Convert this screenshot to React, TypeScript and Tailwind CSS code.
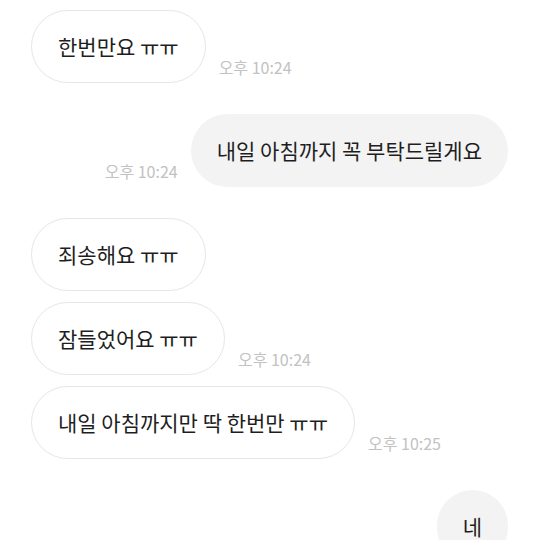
import React from 'react'

type Msg = { id: number; text: string; mine: boolean; time?: string; gap: 'group' | 'same' | 'none' }

const messages: Msg[] = [
  { id: 1, text: '한번만요 ㅠㅠ', mine: false, time: '오후 10:24', gap: 'none' },
  { id: 2, text: '내일 아침까지 꼭 부탁드릴게요', mine: true, time: '오후 10:24', gap: 'group' },
  { id: 3, text: '죄송해요 ㅠㅠ', mine: false, gap: 'group' },
  { id: 4, text: '잠들었어요 ㅠㅠ', mine: false, time: '오후 10:24', gap: 'same' },
  { id: 5, text: '내일 아침까지만 딱 한번만 ㅠㅠ', mine: false, time: '오후 10:25', gap: 'same' },
  { id: 6, text: '네', mine: true, gap: 'group' },
]

function Bubble({ m }: { m: Msg }) {
  const spacing = m.gap === 'group' ? 'mt-[31px]' : m.gap === 'same' ? 'mt-[11px]' : ''
  const time = m.time ? (
    <span className="mb-[8px] text-[16px] leading-none text-[#c2c2c2] whitespace-nowrap">{m.time}</span>
  ) : null

  return (
    <div className={`flex items-end gap-[13px] ${m.mine ? 'justify-end' : 'justify-start'} ${spacing}`}>
      {m.mine && time}
      <div
        className={
          m.mine
            ? 'h-[73px] px-[26px] flex items-center rounded-full bg-[#f3f3f3] shrink-0'
            : 'h-[73px] px-[26px] flex items-center rounded-full bg-white border border-[#e6e6e6] shrink-0'
        }
      >
        <span className="text-[21px] leading-none text-[#1e1e1e] whitespace-nowrap">{m.text}</span>
      </div>
      {!m.mine && time}
    </div>
  )
}

export default function App() {
  return (
    <div
      className="w-[540px] h-[540px] overflow-hidden bg-white pt-[10px] pl-[31px] pr-[32px]"
      style={{ fontFamily: '"Noto Sans CJK KR", "Noto Sans", sans-serif' }}
    >
      {messages.map((m) => (
        <Bubble key={m.id} m={m} />
      ))}
    </div>
  )
}
